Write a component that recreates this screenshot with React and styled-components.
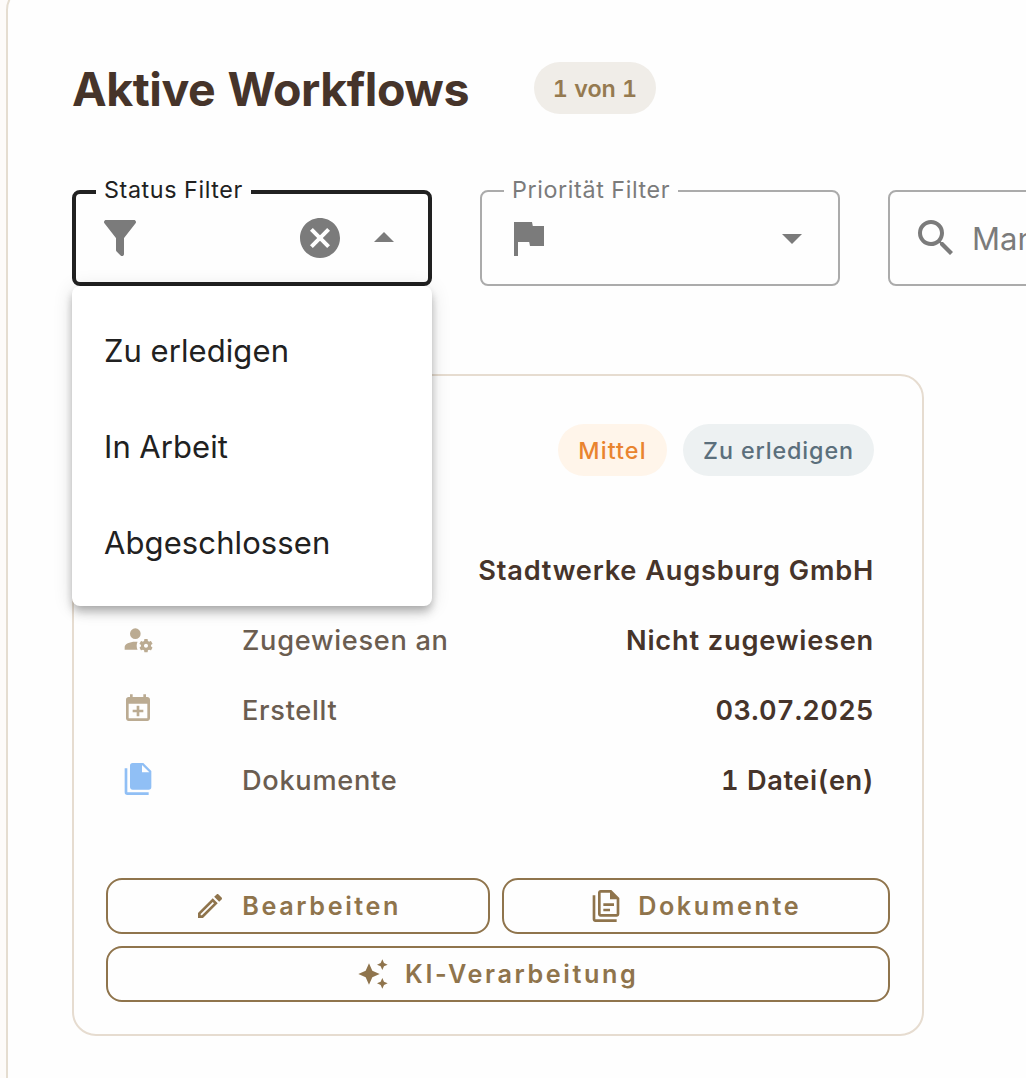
import React from "react";
import styled, { createGlobalStyle } from "styled-components";

const icons = {
  filter:
    "M14,12V19.88C14.04,20.18 13.94,20.5 13.71,20.71C13.32,21.1 12.69,21.1 12.3,20.71L10.29,18.7C10.06,18.47 9.96,18.16 10,17.87V12H9.97L4.21,4.62C3.87,4.19 3.95,3.56 4.38,3.22C4.57,3.08 4.78,3 5,3H19C19.22,3 19.43,3.08 19.62,3.22C20.05,3.56 20.13,4.19 19.79,4.62L14.03,12H14Z",
  flag: "M14.4,6L14,4H5V21H7V14H12.6L13,16H20V6H14.4Z",
  search:
    "M9.5,3A6.5,6.5 0 0,1 16,9.5C16,11.11 15.41,12.59 14.44,13.73L14.71,14H15.5L20.5,19L19,20.5L14,15.5V14.71L13.73,14.44C12.59,15.41 11.11,16 9.5,16A6.5,6.5 0 0,1 3,9.5A6.5,6.5 0 0,1 9.5,3M9.5,5C7,5 5,7 5,9.5C5,12 7,14 9.5,14C12,14 14,12 14,9.5C14,7 12,5 9.5,5Z",
  clear:
    "M12,2C17.53,2 22,6.47 22,12C22,17.53 17.53,22 12,22C6.47,22 2,17.53 2,12C2,6.47 6.47,2 12,2M15.59,7L12,10.59L8.41,7L7,8.41L10.59,12L7,15.59L8.41,17L12,13.41L15.59,17L17,15.59L13.41,12L17,8.41L15.59,7Z",
  down: "M7,10L12,15L17,10H7Z",
  up: "M7,14L12,9L17,14H7Z",
  assignee:
    "M10 4A4 4 0 0 0 6 8A4 4 0 0 0 10 12A4 4 0 0 0 14 8A4 4 0 0 0 10 4M17 12C16.87 12 16.76 12.09 16.74 12.21L16.55 13.53C16.25 13.66 15.96 13.82 15.7 14L14.46 13.5C14.35 13.5 14.22 13.5 14.15 13.63L13.15 15.36C13.09 15.47 13.11 15.6 13.21 15.68L14.27 16.5C14.25 16.67 14.24 16.83 14.24 17C14.24 17.17 14.25 17.33 14.27 17.5L13.21 18.32C13.12 18.4 13.09 18.53 13.15 18.64L14.15 20.37C14.21 20.5 14.34 20.5 14.46 20.5L15.7 20C15.96 20.18 16.24 20.35 16.55 20.47L16.74 21.79C16.76 21.91 16.86 22 17 22H19C19.11 22 19.22 21.91 19.24 21.79L19.43 20.47C19.73 20.34 20 20.18 20.27 20L21.5 20.5C21.63 20.5 21.76 20.5 21.83 20.37L22.83 18.64C22.89 18.53 22.86 18.4 22.77 18.32L21.7 17.5C21.72 17.33 21.74 17.17 21.74 17C21.74 16.83 21.73 16.67 21.7 16.5L22.76 15.68C22.85 15.6 22.88 15.47 22.82 15.36L21.82 13.63C21.76 13.5 21.63 13.5 21.5 13.5L20.27 14C20 13.82 19.73 13.65 19.42 13.53L19.23 12.21C19.22 12.09 19.11 12 19 12H17M10 14C5.58 14 2 15.79 2 18V20H11.68A7 7 0 0 1 11 17A7 7 0 0 1 11.64 14.09C11.11 14.03 10.56 14 10 14M18 15.5C18.83 15.5 19.5 16.17 19.5 17C19.5 17.83 18.83 18.5 18 18.5C17.16 18.5 16.5 17.83 16.5 17C16.5 16.17 17.17 15.5 18 15.5Z",
  created:
    "M19 19V8H5V19H19M16 1H18V3H19C20.1 3 21 3.89 21 5V19C21 20.11 20.1 21 19 21H5C3.89 21 3 20.1 3 19V5C3 3.89 3.89 3 5 3H6V1H8V3H16V1M11 9.5H13V12.5H16V14.5H13V17.5H11V14.5H8V12.5H11V9.5Z",
  files:
    "M15,7H20.5L15,1.5V7M8,0H16L22,6V18A2,2 0 0,1 20,20H8C6.89,20 6,19.1 6,18V2A2,2 0 0,1 8,0M4,4V22H20V24H4A2,2 0 0,1 2,22V4H4Z",
  documents:
    "M16 0H8C6.9 0 6 .9 6 2V18C6 19.1 6.9 20 8 20H20C21.1 20 22 19.1 22 18V6L16 0M20 18H8V2H15V7H20V18M4 4V22H20V24H4C2.9 24 2 23.1 2 22V4H4M10 10V12H18V10H10M10 14V16H15V14H10Z",
  pencil:
    "M14.06,9L15,9.94L5.92,19H5V18.08L14.06,9M17.66,3C17.41,3 17.15,3.1 16.96,3.29L15.13,5.12L18.88,8.87L20.71,7.04C21.1,6.65 21.1,6 20.71,5.63L18.37,3.29C18.17,3.09 17.92,3 17.66,3M14.06,6.19L3,17.25V21H6.75L17.81,9.94L14.06,6.19Z",
  sparkles:
    "M19,1L17.74,3.75L15,5L17.74,6.26L19,9L20.25,6.26L23,5L20.25,3.75M9,4L6.5,9.5L1,12L6.5,14.5L9,20L11.5,14.5L17,12L11.5,9.5M19,15L17.74,17.74L15,19L17.74,20.25L19,23L20.25,20.25L23,19L20.25,17.74",
};

const GlobalStyle = createGlobalStyle`
  * { box-sizing: border-box; }
  body {
    margin: 0;
    background: #fdfbf9;
    font-family: Inter, "Liberation Sans", sans-serif;
    font-variant-numeric: tabular-nums;
  }
`;

const Page = styled.div`
  height: 1078px;
  padding-left: 6px;
  overflow: hidden;
`;

const Panel = styled.main`
  width: 1400px;
  height: 1200px;
  margin-top: -14px;
  padding: 74px 64px 0;
  background: #fefefe;
  border: 2px solid #e5ddd0;
  border-radius: 24px;
`;

const Header = styled.header`
  display: flex;
  align-items: center;
  height: 52px;
`;

const Title = styled.h1`
  width: 462px;
  margin: 2px 0 0;
  color: #46342a;
  font-size: 46.5px;
  font-weight: 700;
  line-height: 52px;
  letter-spacing: -0.45px;
  white-space: nowrap;
`;

const Chip = styled.span`
  display: inline-flex;
  align-items: center;
  justify-content: center;
  height: 52px;
  width: ${(p) => p.$width}px;
  padding-top: 1px;
  border-radius: 26px;
  background: ${(p) => p.$bg};
  color: ${(p) => p.$color};
  font-size: 23.3px;
  font-weight: ${(p) => p.$weight || 500};
  letter-spacing: ${(p) => p.$spacing}px;
  white-space: nowrap;
`;

const Filters = styled.section`
  display: flex;
  gap: 48px;
  margin-top: 76px;
`;

const Field = styled.div`
  position: relative;
  display: flex;
  align-items: center;
  flex: 0 0 360px;
  height: 96px;
  padding: 0 ${(p) => (p.$focused ? 20 : 22)}px;
  border: ${(p) => (p.$focused ? "4px solid #212121" : "2px solid #ababab")};
  border-radius: 8px;
  color: #7b7b7b;
`;

const FieldLabel = styled.label`
  position: absolute;
  top: ${(p) => (p.$focused ? -19 : -17)}px;
  left: ${(p) => (p.$focused ? 20 : 22)}px;
  width: ${(p) => p.$width}px;
  padding-left: 8px;
  background: #fefefe;
  color: ${(p) => (p.$focused ? "#212121" : "#7b7b7b")};
  font-size: 23.3px;
  line-height: 30px;
  letter-spacing: 0.62px;
  white-space: nowrap;
`;

const FieldEnd = styled.div`
  display: flex;
  gap: 16px;
  margin-left: auto;
`;

const Placeholder = styled.span`
  margin-left: 12px;
  font-size: 31px;
  letter-spacing: 0.1px;
`;

const Menu = styled.ul`
  position: absolute;
  z-index: 2;
  top: 92px;
  left: -4px;
  width: 360px;
  height: 320px;
  margin: 0;
  padding: 16px 0;
  list-style: none;
  border-radius: 8px;
  background: #fff;
  box-shadow: 0 4px 8px -2px rgba(0, 0, 0, 0.2), 0 8px 10px 0 rgba(0, 0, 0, 0.14),
    0 2px 20px 0 rgba(0, 0, 0, 0.12);
`;

const MenuItem = styled.li`
  display: flex;
  align-items: center;
  height: 96px;
  padding: 0 32px;
  color: #212121;
  font-size: 31px;
  letter-spacing: 0.1px;
`;

const Card = styled.article`
  width: 852px;
  margin-top: 88px;
  padding: 48px 32px 32px;
  border: 2px solid #e6dcd0;
  border-radius: 24px;
`;

const Chips = styled.div`
  display: flex;
  justify-content: flex-end;
  gap: 16px;
  padding-right: 16px;
`;

const Details = styled.div`
  margin: 59px 0 63px;
  padding: 0 16px;
`;

const Row = styled.div`
  display: grid;
  grid-template-columns: 120px auto 1fr;
  align-items: center;
  height: 70px;
  font-size: 27.2px;
  white-space: nowrap;
`;

const RowIcon = styled.span`
  display: flex;
  padding-bottom: 2px;
  color: ${(p) => p.$color};
`;

const RowLabel = styled.span`
  padding-top: 1px;
  color: #6b5d50;
  font-weight: 500;
  letter-spacing: 0.7px;
`;

const RowValue = styled.span`
  padding-top: 1px;
  color: #46342a;
  font-weight: 600;
  letter-spacing: ${(p) => p.$spacing || 0.78}px;
  text-align: right;
`;

const Actions = styled.div`
  display: grid;
  grid-template-columns: 384px 388px;
  gap: 12px;
`;

const Action = styled.button`
  display: flex;
  align-items: center;
  justify-content: center;
  gap: 16.5px;
  grid-column: ${(p) => (p.$wide ? "1 / -1" : "auto")};
  height: 56px;
  padding: 0 1px 0 0;
  border: 2px solid #8f744c;
  border-radius: 16px;
  background: transparent;
  color: #8f744c;
  font-family: inherit;
  font-size: 25.2px;
  font-weight: 600;
  letter-spacing: 2.6px;
  line-height: 30px;
  white-space: nowrap;
`;

const Svg = styled.svg`
  display: block;
  flex: none;
  fill: currentColor;
`;

function Icon({ name, size = 48 }) {
  return (
    <Svg viewBox="0 0 24 24" width={size} height={size} aria-hidden="true">
      <path d={icons[name]} />
    </Svg>
  );
}

const rows = [
  { value: "Stadtwerke Augsburg GmbH" },
  { icon: "assignee", label: "Zugewiesen an", value: "Nicht zugewiesen", color: "#bbab92" },
  { icon: "created", label: "Erstellt", value: "03.07.2025", color: "#bbab92", spacing: 0.32 },
  { icon: "files", label: "Dokumente", value: "1 Datei(en)", color: "#90bff5", spacing: 0.58 },
];

const statuses = ["Zu erledigen", "In Arbeit", "Abgeschlossen"];

export default function App() {
  return (
    <>
      <GlobalStyle />
      <Page>
        <Panel>
          <Header>
            <Title>Aktive Workflows</Title>
            <Chip $width={122} $bg="#f0ede8" $color="#957a50" $weight={600} $spacing={0}>1 von 1</Chip>
          </Header>
          <Filters>
            <Field $focused>
              <FieldLabel $focused $width={155}>Status Filter</FieldLabel>
              <Icon name="filter" />
              <FieldEnd>
                <Icon name="clear" />
                <Icon name="up" />
              </FieldEnd>
              <Menu>
                {statuses.map((s) => <MenuItem key={s}>{s}</MenuItem>)}
              </Menu>
            </Field>
            <Field>
              <FieldLabel $width={174}>Priorität Filter</FieldLabel>
              <Icon name="flag" />
              <FieldEnd>
                <Icon name="down" />
              </FieldEnd>
            </Field>
            <Field>
              <Icon name="search" />
              <Placeholder>Mandant</Placeholder>
            </Field>
          </Filters>
          <Card>
            <Chips>
              <Chip $width={109} $bg="#fff5ea" $color="#e9842f" $spacing={1.1}>Mittel</Chip>
              <Chip $width={191} $bg="#edf1f2" $color="#5b6f7c" $spacing={0.88}>Zu erledigen</Chip>
            </Chips>
            <Details>
              {rows.map((r) => (
                <Row key={r.value}>
                  <RowIcon $color={r.color}>{r.icon && <Icon name={r.icon} size={32} />}</RowIcon>
                  <RowLabel>{r.label}</RowLabel>
                  <RowValue $spacing={r.spacing}>{r.value}</RowValue>
                </Row>
              ))}
            </Details>
            <Actions>
              <Action><Icon name="pencil" size={32} />Bearbeiten</Action>
              <Action><Icon name="documents" size={32} />Dokumente</Action>
              <Action $wide><Icon name="sparkles" size={32} />KI-Verarbeitung</Action>
            </Actions>
          </Card>
        </Panel>
      </Page>
    </>
  );
}
